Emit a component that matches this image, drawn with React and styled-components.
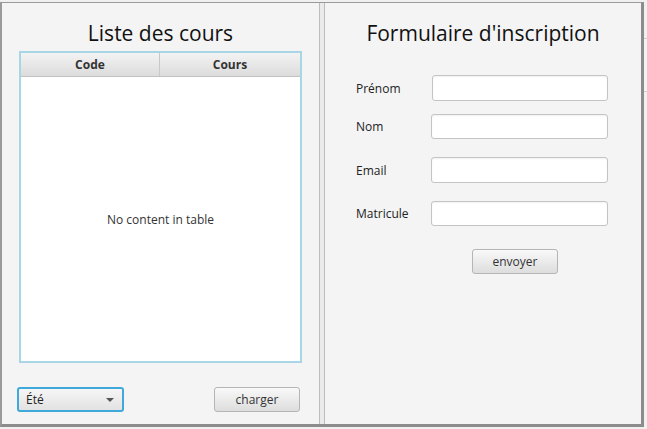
import React from 'react';
import styled, { createGlobalStyle } from 'styled-components';

const GlobalStyle = createGlobalStyle`
  html, body {
    margin: 0;
    padding: 0;
    background: #f0f0f0;
    font-family: 'Open Sans', 'Noto Sans', sans-serif;
    color: #333333;
  }
`;

const Page = styled.div`
  display: flex;
  width: 647px;
  height: 429px;
  overflow: hidden;
`;

const Window = styled.div`
  display: flex;
  width: 644px;
  height: 425px;
  margin-top: 2px;
  box-sizing: border-box;
  border: 1px solid #9a9a9a;
  border-left-width: 2px;
  border-right: 3px solid #8c8c8c;
  border-bottom: 3px solid #8c8c8c;
  background: #f4f4f4;
  flex-shrink: 0;
`;

const Backdrop = styled.div`
  flex: 1;
  background: #f3f3f3;
  border-top: 1px solid #d0d0d0;
  margin-top: 38px;
  height: 52px;
  border-bottom: 1px solid #d0d0d0;
`;

const LeftPane = styled.section`
  width: 317px;
  display: flex;
  flex-direction: column;
`;

const Divider = styled.div`
  width: 4px;
  border-left: 1px solid #bdbdbd;
  border-right: 1px solid #bdbdbd;
  background: #ebebeb;
`;

const RightPane = styled.section`
  flex: 1;
  display: flex;
  flex-direction: column;
`;

const Title = styled.h1`
  margin: 0;
  height: ${(p) => p.$height}px;
  padding-top: ${(p) => p.$top}px;
  box-sizing: border-box;
  font-size: 21px;
  line-height: 28px;
  font-weight: normal;
  color: #111111;
  text-align: center;
`;

const Table = styled.div`
  margin: 0 17px;
  height: 312px;
  box-sizing: border-box;
  border: 2px solid #a9d6e6;
  background: #ffffff;
  display: flex;
  flex-direction: column;
`;

const HeaderRow = styled.div`
  display: grid;
  grid-template-columns: 139px 1fr;
  height: 24px;
  box-sizing: border-box;
  border-bottom: 1px solid #c2c2c2;
  background: linear-gradient(#f3f3f3, #dcdcdc);
`;

const HeaderCell = styled.div`
  display: flex;
  align-items: center;
  justify-content: center;
  font-size: 12px;
  font-weight: bold;
  color: #333333;
  border-right: ${(p) => (p.$last ? 'none' : '1px solid #c8c8c8')};
`;

const Placeholder = styled.div`
  flex: 1;
  display: flex;
  align-items: center;
  justify-content: center;
  font-size: 12px;
  color: #333333;
`;

const BottomBar = styled.div`
  display: flex;
  justify-content: space-between;
  align-items: center;
  padding: 24px 19px 0 15px;
`;

const Combo = styled.div`
  width: 107px;
  height: 25px;
  box-sizing: border-box;
  border: 2px solid #3fa9db;
  border-radius: 3px;
  background: linear-gradient(#f6f6f6, #e2e2e2);
  display: flex;
  align-items: center;
  justify-content: space-between;
  padding: 0 8px 0 7px;
  font-size: 12px;
  color: #222222;
`;

const Arrow = styled.span`
  width: 0;
  height: 0;
  border-left: 4px solid transparent;
  border-right: 4px solid transparent;
  border-top: 4px solid #555555;
`;

const Button = styled.button`
  width: 86px;
  height: 25px;
  padding: 0;
  border: 1px solid #b5b5b5;
  border-radius: 3px;
  background: linear-gradient(#f9f9f9, #dddddd);
  font-family: inherit;
  font-size: 12px;
  color: #333333;
`;

const Form = styled.div`
  display: flex;
  flex-direction: column;
  padding-left: 31px;
  margin-top: 26px;
`;

const FieldRow = styled.div`
  display: flex;
  align-items: center;
  margin-top: ${(p) => p.$gap}px;
`;

const Label = styled.label`
  width: ${(p) => 75 + (p.$indent || 0)}px;
  font-size: 12px;
  color: #222222;
`;

const Field = styled.input`
  box-sizing: border-box;
  width: ${(p) => 177 - (p.$indent || 0)}px;
  height: ${(p) => p.$h}px;
  border: 1px solid #c4c4c4;
  border-radius: 3px;
  background: #ffffff;
  box-shadow: inset 0 1px 2px rgba(0, 0, 0, 0.06);
  outline: none;
`;

const Actions = styled.div`
  margin-top: 23px;
  padding-left: 147px;
`;

const fields = [
  { label: 'Prénom', h: 26, gap: 0, indent: 1 },
  { label: 'Nom', h: 25, gap: 13 },
  { label: 'Email', h: 26, gap: 18 },
  { label: 'Matricule', h: 25, gap: 18 },
];

export default function App() {
  return (
    <Page>
      <GlobalStyle />
      <Window>
        <LeftPane>
          <Title $height={48} $top={16}>Liste des cours</Title>
          <Table>
            <HeaderRow>
              <HeaderCell>Code</HeaderCell>
              <HeaderCell $last>Cours</HeaderCell>
            </HeaderRow>
            <Placeholder>No content in table</Placeholder>
          </Table>
          <BottomBar>
            <Combo>
              Été
              <Arrow />
            </Combo>
            <Button>charger</Button>
          </BottomBar>
        </LeftPane>
        <Divider />
        <RightPane>
          <Title $height={46} $top={16}>Formulaire d'inscription</Title>
          <Form>
            {fields.map((f) => (
              <FieldRow key={f.label} $gap={f.gap}>
                <Label $indent={f.indent}>{f.label}</Label>
                <Field $h={f.h} $indent={f.indent} />
              </FieldRow>
            ))}
          </Form>
          <Actions>
            <Button>envoyer</Button>
          </Actions>
        </RightPane>
      </Window>
      <Backdrop />
    </Page>
  );
}
